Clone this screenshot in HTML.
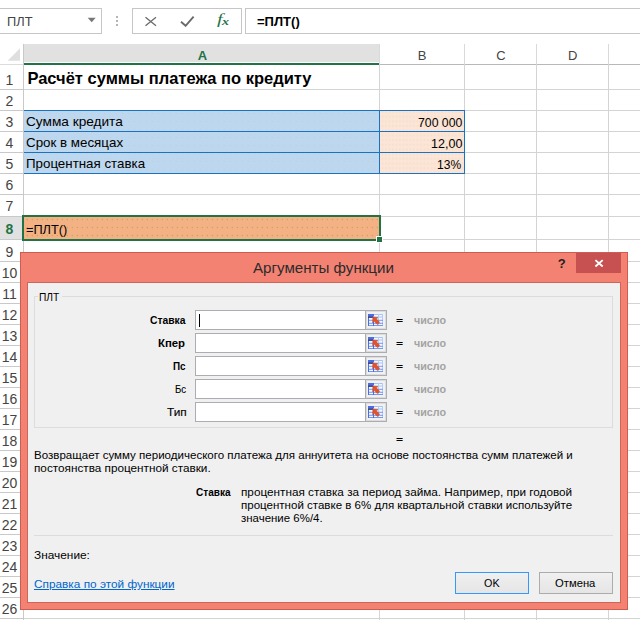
<!DOCTYPE html>
<html lang="ru">
<head>
<meta charset="utf-8">
<title>Аргументы функции</title>
<style>
html,body{margin:0;padding:0;}
body{width:640px;height:620px;position:relative;overflow:hidden;background:#fff;
  font-family:"Liberation Sans",sans-serif;color:#000;}
.abs{position:absolute;}
.t{position:absolute;white-space:nowrap;line-height:1;transform-origin:0 0;}
.box{position:absolute;border:1px solid #c6c6c6;background:#fff;box-sizing:border-box;}
.hl{position:absolute;left:24px;width:616px;height:1px;background:#d4d4d4;}
.rl{position:absolute;left:0;width:23px;height:1px;background:#c9c9c9;}
.vl{position:absolute;top:64px;width:1px;height:556px;background:#d4d4d4;}
.bl{background:#1a72c2;}
.rn{position:absolute;left:-2px;width:23px;text-align:center;font-size:14px;line-height:1;color:#444;}
.hs{position:absolute;top:44px;width:1px;height:20px;background:#dadada;}
#dlg{left:20px;top:252px;width:608px;height:358px;background:#f48273;box-sizing:border-box;border:1px solid #cc5d50;}
#inner{left:27px;top:282px;width:594px;height:321px;background:#f0f0f0;box-sizing:border-box;border:1px solid #cf6558;}
.fr{position:absolute;left:195px;width:192px;height:20px;background:#fff;border:1px solid #abadb3;box-sizing:border-box;}
.fr i{position:absolute;left:169px;top:0;width:1px;height:18px;background:#abadb3;}
.fr b{position:absolute;left:170px;top:0;width:20px;height:18px;background:#f1f1f1;box-shadow:inset 0 0 0 1px #dcdcdc;}
.fr svg{position:absolute;left:172px;top:3px;}
.btn{position:absolute;top:572px;height:22px;box-sizing:border-box;border:1px solid #acacac;background:linear-gradient(#f0f0f0,#e5e5e5);}
</style>
</head>
<body>
<svg width="0" height="0" style="position:absolute">
 <defs>
  <g id="ic">
   <rect x="0" y="0" width="15" height="12" fill="#f3f7ff"/>
   <path d="M6 0.5H15M6 3H15" stroke="#a6c3f4" stroke-width="1" fill="none"/>
   <path d="M10.5 0V12M14.5 0V12" stroke="#b4cdf6" stroke-width="1" fill="none"/>
   <path d="M0 6.3H15M0 9.3H15M0 11.5H15" stroke="#7797e8" stroke-width="1" fill="none"/>
   <path d="M0.5 3.5V12M5.5 3.5V12" stroke="#4a6de0" stroke-width="1" fill="none"/>
   <rect x="0" y="0" width="6" height="2.3" fill="#4a6ce8"/>
   <rect x="0" y="2.3" width="5.3" height="1.5" fill="#1b2a6e"/>
   <path d="M4.9 3.1l5 0.5-1.5 1.4 3.3 3.3-2.3 2.3-3.3-3.3-1.5 1.5z" fill="#e2532c" stroke="#c23e1e" stroke-width="0.5"/>
  </g>
 </defs>
</svg>
<!-- formula bar -->
<div class="box" style="left:-1px;top:8px;width:103px;height:26px;"></div>
<svg class="abs" style="left:87px;top:17px" width="10" height="6"><path d="M0.7 0.8h8L4.7 5.2z" fill="#777"/></svg>
<div class="abs" style="left:116px;top:16px;width:2px;height:2px;background:#b5b5b5"></div>
<div class="abs" style="left:116px;top:20px;width:2px;height:2px;background:#b5b5b5"></div>
<div class="abs" style="left:116px;top:24px;width:2px;height:2px;background:#b5b5b5"></div>
<div class="box" style="left:132px;top:8px;width:110px;height:26px;"></div>
<svg class="abs" style="left:144px;top:16px" width="14" height="11"><path d="M1.5 1.3l10.5 8.4M12 1.3L1.5 9.7" stroke="#6a6a6a" stroke-width="1.3" fill="none"/></svg>
<svg class="abs" style="left:180px;top:15px" width="15" height="12"><path d="M1 6.8l4.6 4L13.6 1.6" stroke="#6a6a6a" stroke-width="1.9" fill="none"/></svg>
<div class="t" id="fi" style="left:216.5px;top:13px;font-family:'Liberation Serif',serif;font-style:italic;font-size:14px;color:#1f7346;transform:scaleX(1.45)">f</div>
<div class="t" id="xi" style="left:221.5px;top:17px;font-family:'Liberation Serif',serif;font-style:italic;font-weight:bold;font-size:10px;color:#1f7346;transform:scaleX(1.4)">x</div>
<div class="box" style="left:245px;top:8px;width:400px;height:26px;"></div>

<!-- column headers -->
<div class="abs" style="left:24px;top:44px;width:355px;height:18px;background:#e1e1e1;"></div>
<div class="abs" style="left:24px;top:63px;width:356px;height:2px;background:#217346;"></div>
<svg class="abs" style="left:7px;top:48px" width="14" height="14"><path d="M13 0.3v12.4H0.6z" fill="#dfdfdf"/></svg>
<div class="hs" style="left:379px"></div><div class="hs" style="left:464px"></div>
<div class="hs" style="left:536px"></div><div class="hs" style="left:608px"></div>
<div class="abs" style="left:380px;top:64px;width:260px;height:1px;background:#b8b8b8"></div>
<div class="abs" style="left:0px;top:64px;width:24px;height:1px;background:#dcdcdc"></div>

<!-- grid lines -->
<div class="vl" style="left:23px;top:44px;height:576px;background:#c9c9c9"></div>
<div class="vl" style="left:379px"></div><div class="vl" style="left:464px"></div>
<div class="vl" style="left:536px"></div><div class="vl" style="left:608px"></div>
<div class="abs" style="left:0;top:217px;width:23px;height:22px;background:#e1e1e1"></div>
<div class="hl" style="top:89px"></div><div class="rl" style="top:89px"></div>
<div class="rn" style="top:73px">1</div>
<div class="hl" style="top:110px"></div><div class="rl" style="top:110px"></div>
<div class="rn" style="top:94px">2</div>
<div class="hl" style="top:131px"></div><div class="rl" style="top:131px"></div>
<div class="rn" style="top:115px">3</div>
<div class="hl" style="top:152px"></div><div class="rl" style="top:152px"></div>
<div class="rn" style="top:136px">4</div>
<div class="hl" style="top:173px"></div><div class="rl" style="top:173px"></div>
<div class="rn" style="top:157px">5</div>
<div class="hl" style="top:194px"></div><div class="rl" style="top:194px"></div>
<div class="rn" style="top:178px">6</div>
<div class="hl" style="top:216px"></div><div class="rl" style="top:216px"></div>
<div class="rn" style="top:199px">7</div>
<div class="hl" style="top:239px"></div><div class="rl" style="top:239px"></div>
<div class="rn" style="top:222px;color:#217346;font-weight:bold">8</div>
<div class="hl" style="top:261px"></div><div class="rl" style="top:261px"></div>
<div class="rn" style="top:245px">9</div>
<div class="hl" style="top:282px"></div><div class="rl" style="top:282px"></div>
<div class="rn" style="top:266px">10</div>
<div class="hl" style="top:303px"></div><div class="rl" style="top:303px"></div>
<div class="rn" style="top:287px">11</div>
<div class="hl" style="top:324px"></div><div class="rl" style="top:324px"></div>
<div class="rn" style="top:308px">12</div>
<div class="hl" style="top:345px"></div><div class="rl" style="top:345px"></div>
<div class="rn" style="top:329px">13</div>
<div class="hl" style="top:366px"></div><div class="rl" style="top:366px"></div>
<div class="rn" style="top:350px">14</div>
<div class="hl" style="top:387px"></div><div class="rl" style="top:387px"></div>
<div class="rn" style="top:371px">15</div>
<div class="hl" style="top:408px"></div><div class="rl" style="top:408px"></div>
<div class="rn" style="top:392px">16</div>
<div class="hl" style="top:429px"></div><div class="rl" style="top:429px"></div>
<div class="rn" style="top:413px">17</div>
<div class="hl" style="top:450px"></div><div class="rl" style="top:450px"></div>
<div class="rn" style="top:434px">18</div>
<div class="hl" style="top:471px"></div><div class="rl" style="top:471px"></div>
<div class="rn" style="top:455px">19</div>
<div class="hl" style="top:492px"></div><div class="rl" style="top:492px"></div>
<div class="rn" style="top:476px">20</div>
<div class="hl" style="top:513px"></div><div class="rl" style="top:513px"></div>
<div class="rn" style="top:497px">21</div>
<div class="hl" style="top:534px"></div><div class="rl" style="top:534px"></div>
<div class="rn" style="top:518px">22</div>
<div class="hl" style="top:555px"></div><div class="rl" style="top:555px"></div>
<div class="rn" style="top:539px">23</div>
<div class="hl" style="top:576px"></div><div class="rl" style="top:576px"></div>
<div class="rn" style="top:560px">24</div>
<div class="hl" style="top:597px"></div><div class="rl" style="top:597px"></div>
<div class="rn" style="top:581px">25</div>
<div class="hl" style="top:618px"></div><div class="rl" style="top:618px"></div>
<div class="rn" style="top:602px">26</div>

<!-- cells -->
<div class="abs" style="left:24px;top:111px;width:355px;height:62px;background-color:#bdd7ee;background-image:radial-gradient(circle at 2.5px 2.5px,rgba(205,190,205,.32) 0.5px,transparent 1.1px);background-size:6px 8px;"></div>
<div class="abs" style="left:380px;top:111px;width:84px;height:62px;background-color:#fce4d6;background-image:radial-gradient(circle at 2.5px 0.9px,rgba(200,215,160,.3) 0.45px,transparent 0.95px);background-size:3.5px 4.7px;"></div>
<div class="abs bl" style="left:24px;top:110px;width:441px;height:1px;"></div>
<div class="abs bl" style="left:24px;top:131px;width:441px;height:1px;"></div>
<div class="abs bl" style="left:24px;top:152px;width:441px;height:1px;"></div>
<div class="abs bl" style="left:24px;top:173px;width:441px;height:1px;"></div>
<div class="abs bl" style="left:379px;top:110px;width:1px;height:64px;"></div>
<div class="abs bl" style="left:464px;top:110px;width:1px;height:64px;"></div>
<div class="abs" style="left:22px;top:215px;width:359px;height:26px;background-color:#f4b183;background-image:radial-gradient(circle at 3.4px 2.5px,rgba(165,160,70,.6) 0.5px,transparent 1.1px);background-size:5px 8px;border:2px solid #217346;box-sizing:border-box"></div>
<div class="abs" style="left:376px;top:236px;width:5px;height:5px;background:#217346;border:1px solid #fff;"></div>

<!-- dialog -->
<div class="abs" id="dlg"></div>
<div class="abs" style="left:576px;top:253px;width:45px;height:20px;background:#c75050"></div>
<svg class="abs" style="left:594px;top:259px" width="11" height="9"><path d="M1.4 1.1l7.3 6.4M8.7 1.1l-7.3 6.4" stroke="#fff" stroke-width="1.9" fill="none"/></svg>
<div class="abs" id="inner"></div>
<div class="abs" style="left:34px;top:296px;width:579px;height:132px;border:1px solid #dcdcdc;box-sizing:border-box"></div>
<div class="abs" style="left:38px;top:294px;width:24px;height:5px;background:#f0f0f0"></div>

<div class="fr" style="top:310px"><i></i><b></b><svg width="15" height="12"><use href="#ic"/></svg></div>
<div class="fr" style="top:333px"><i></i><b></b><svg width="15" height="12"><use href="#ic"/></svg></div>
<div class="fr" style="top:356px"><i></i><b></b><svg width="15" height="12"><use href="#ic"/></svg></div>
<div class="fr" style="top:379px"><i></i><b></b><svg width="15" height="12"><use href="#ic"/></svg></div>
<div class="fr" style="top:402px"><i></i><b></b><svg width="15" height="12"><use href="#ic"/></svg></div>
<div class="abs" style="left:199px;top:314px;width:1px;height:13px;background:#000"></div>

<div class="abs" style="left:34px;top:535px;width:579px;height:1px;background:#dcdcdc"></div>
<div class="btn" style="left:455px;width:74px;border-color:#3399ff;"></div>
<div class="btn" style="left:539px;width:74px;"></div>

<div class="t" id="nb" style="left:7.07px;top:16px;font-size:12px;color:#444;transform:scaleX(1.0693);">ПЛТ</div>
<div class="t" id="fx" style="left:256.96px;top:16px;font-size:12px;font-weight:bold;transform:scaleX(1.0851);">=ПЛТ()</div>
<div class="t" id="hA" style="left:197.65px;top:49px;font-size:13px;font-weight:bold;color:#217346;">A</div>
<div class="t" id="hB" style="left:417.76px;top:49px;font-size:13px;color:#444;">B</div>
<div class="t" id="hC" style="left:496.28px;top:49px;font-size:13px;color:#444;">C</div>
<div class="t" id="hD" style="left:568.00px;top:49px;font-size:13px;color:#444;">D</div>
<div class="t" id="c1" style="left:27.39px;top:70px;font-size:16.5px;font-weight:bold;">Расчёт суммы платежа по кредиту</div>
<div class="t" id="c3" style="left:25.87px;top:115px;font-size:13px;transform:scaleX(1.0499);">Сумма кредита</div>
<div class="t" id="c4" style="left:25.89px;top:136px;font-size:13px;transform:scaleX(1.0265);">Срок в месяцах</div>
<div class="t" id="c5" style="left:25.52px;top:157px;font-size:13px;transform:scaleX(1.0248);">Процентная ставка</div>
<div class="t" id="b3" style="left:417.82px;top:116px;font-size:13px;transform:scaleX(0.9424);">700 000</div>
<div class="t" id="b4" style="left:430.75px;top:137px;font-size:13px;transform:scaleX(0.9660);">12,00</div>
<div class="t" id="b5" style="left:437.34px;top:158px;font-size:13px;transform:scaleX(0.9272);">13%</div>
<div class="t" id="c8" style="left:25.93px;top:223px;font-size:13px;transform:scaleX(0.9805);">=ПЛТ()</div>
<div class="t" id="ttl" style="left:253.18px;top:260px;font-size:15px;color:#2b2b2b;transform:scaleX(1.0081);">Аргументы функции</div>
<div class="t" id="q" style="left:557.74px;top:257px;font-size:13px;font-weight:bold;color:#222;">?</div>
<div class="t" id="grp" style="left:39.45px;top:292px;font-size:11.5px;transform:scaleX(0.8876);">ПЛТ</div>
<div class="t" id="l1" style="left:149.63px;top:315px;font-size:11.5px;font-weight:bold;transform:scaleX(0.8961);">Ставка</div>
<div class="t" id="l2" style="left:158.42px;top:338px;font-size:11.5px;font-weight:bold;transform:scaleX(0.9879);">Кпер</div>
<div class="t" id="l3" style="left:173.33px;top:361px;font-size:11.5px;font-weight:bold;transform:scaleX(0.8601);">Пс</div>
<div class="t" id="l4" style="left:175.13px;top:384px;font-size:11.5px;-webkit-text-stroke:0.12px #000;transform:scaleX(0.8341);">Бс</div>
<div class="t" id="l5" style="left:166.75px;top:407px;font-size:11.5px;-webkit-text-stroke:0.12px #000;transform:scaleX(1.0252);">Тип</div>
<div class="t" id="ds1" style="left:33.85px;top:450px;font-size:11.5px;transform:scaleX(1.0036);">Возвращает сумму периодического платежа для аннуитета на основе постоянства сумм платежей и</div>
<div class="t" id="ds2" style="left:33.82px;top:463px;font-size:11.5px;transform:scaleX(1.0215);">постоянства процентной ставки.</div>
<div class="t" id="st" style="left:196.40px;top:487px;font-size:11.5px;font-weight:bold;transform:scaleX(0.8732);">Ставка</div>
<div class="t" id="a1" style="left:240.82px;top:487px;font-size:11.5px;transform:scaleX(1.0216);">процентная ставка за период займа. Например, при годовой</div>
<div class="t" id="a2" style="left:241.15px;top:500px;font-size:11.5px;transform:scaleX(1.0025);">процентной ставке в 6% для квартальной ставки используйте</div>
<div class="t" id="a3" style="left:240.95px;top:513px;font-size:11.5px;transform:scaleX(0.9962);">значение 6%/4.</div>
<div class="t" id="zn" style="left:33.85px;top:550px;font-size:11.5px;transform:scaleX(1.0319);">Значение:</div>
<div class="t" id="lnk" style="left:33.53px;top:579px;font-size:11.5px;color:#0066cc;text-decoration:underline;transform:scaleX(1.0274);">Справка по этой функции</div>
<div class="t" id="ok" style="left:484.34px;top:578px;font-size:11.5px;transform:scaleX(0.9375);">OK</div>
<div class="t" id="cn" style="left:555.47px;top:578px;font-size:11.5px;transform:scaleX(0.9778);">Отмена</div>
<div class="t" id="e1" style="left:395.78px;top:317px;font-size:9px;font-weight:bold;transform:scaleX(1.3461);">=</div>
<div class="t" id="n1" style="left:413.75px;top:315px;font-size:11.5px;font-weight:bold;color:#a3a3a3;transform:scaleX(0.9341);">число</div>
<div class="t" id="e2" style="left:395.78px;top:340px;font-size:9px;font-weight:bold;transform:scaleX(1.3461);">=</div>
<div class="t" id="n2" style="left:413.75px;top:338px;font-size:11.5px;font-weight:bold;color:#a3a3a3;transform:scaleX(0.9341);">число</div>
<div class="t" id="e3" style="left:395.78px;top:363px;font-size:9px;font-weight:bold;transform:scaleX(1.3461);">=</div>
<div class="t" id="n3" style="left:413.75px;top:361px;font-size:11.5px;font-weight:bold;color:#a3a3a3;transform:scaleX(0.9341);">число</div>
<div class="t" id="e4" style="left:395.78px;top:386px;font-size:9px;font-weight:bold;transform:scaleX(1.3461);">=</div>
<div class="t" id="n4" style="left:413.75px;top:384px;font-size:11.5px;font-weight:bold;color:#a3a3a3;transform:scaleX(0.9341);">число</div>
<div class="t" id="e5" style="left:395.78px;top:409px;font-size:9px;font-weight:bold;transform:scaleX(1.3461);">=</div>
<div class="t" id="n5" style="left:413.75px;top:407px;font-size:11.5px;font-weight:bold;color:#a3a3a3;transform:scaleX(0.9341);">число</div>
<div class="t" id="e6" style="left:395.78px;top:436px;font-size:9px;font-weight:bold;transform:scaleX(1.3461);">=</div>
</body>
</html>
